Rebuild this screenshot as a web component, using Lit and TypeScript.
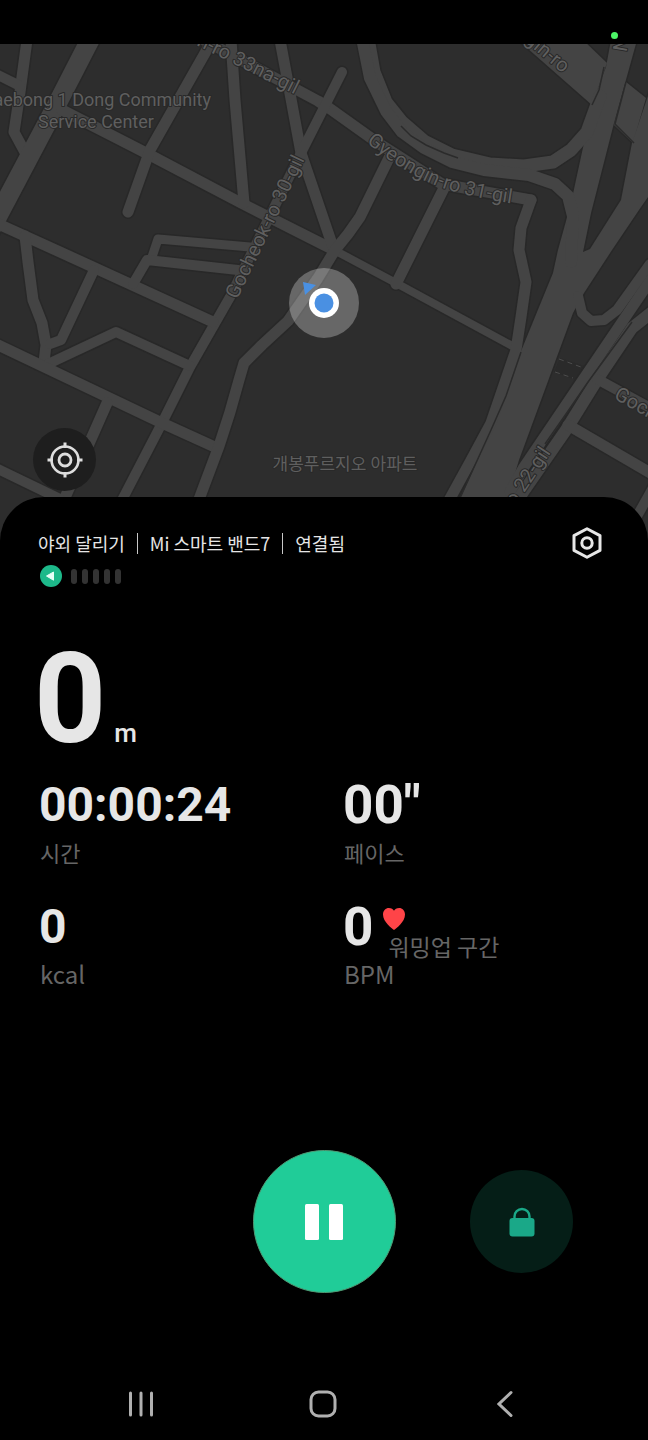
import { LitElement, css, html, svg } from "lit";
import { customElement } from "lit/decorators.js";

type Road = [width: number, points: string];

const ROADS: Road[] = [
  [11, "27,40 20,92 14,132 27,156"],
  [19, "91,38 55,108 -20,250"],
  [10, "-4,74 20,86"],
  [11, "62,110 148,154 243,204 336,251"],
  [8, "334,250 396,283 516,348"],
  [11, "209,46 150,150 128,212"],
  [11, "200,38 318,101 329,108 378,143 442,184 531,200"],
  [11, "231,40 235,100 244,203"],
  [11, "280,40 289,88 301,153 334,250"],
  [10, "342,72 301,153 230,297 190,367 162,423 121,502"],
  [11, "-4,223 60,252 213,322"],
  [11, "25,236 28,262 33,300 42,323 46,345 44,362"],
  [10, "94,270 61,340 50,344"],
  [10, "48,364 116,332 190,366"],
  [11, "-4,344 162,423 217,448"],
  [11, "107,403 88,446 63,502"],
  [10, "-4,468 60,499"],
  [9, "250,247 158,239 152,257"],
  [10, "238,270 147,260 133,284"],
  [11, "389,158 360,217 348,234 335,250 318,278 288,321 262,345 244,363 239,380 230,412 219,446 198,502"],
  [11, "444,188 396,284"],
  [11, "531,200 521,228 519,250 526,282 521,317 516,350 491,423 470,462 447,504"],
  [13, "368,38 374,72 386,102 402,122 424,141 452,155 490,164 524,166 553,162 571,150 587,132 600,96"],
  [12, "362,38 370,78 386,111 402,132 424,148 452,162 484,170 529,175 555,184 568,196 573,216 571,262"],
  [10, "578,296 582,313 591,321 604,320 617,310 650,264"],
  [11, "652,278 639,297 524,467 510,492"],
  [12, "652,312 632,328 597,380 566,430 512,508"],
  [10, "597,379 652,409"],
  [11, "568,425 652,474"],
  [10, "636,518 654,486"],
];

const AREAS: string[] = [
  "518,40 583,40 607,63 592,105",
  "626,82 646,98 633,143 614,125",
  "611,40 637,40 614,123 591,213 583,252 590,249 621,200 632,143 650,90 650,194 641,207 612,250 584,293 580,300 573,313 519,460 507,500 502,510 455,510 484,446 497,410 553,273 558,250 571,203 584,143 592,103 606,67",
];

@customElement("run-map")
export class RunMap extends LitElement {
  static styles = css`
    :host {
      display: block;
      background: #2d2d2d;
    }
    .canvas {
      display: block;
      width: 100%;
      height: 100%;
    }
    .casing,
    .road {
      fill: none;
      stroke-linejoin: round;
      stroke-linecap: round;
    }
    .casing {
      stroke: #282828;
    }
    .road {
      stroke: #444444;
    }
    .area {
      fill: #444444;
    }
    .area-edge {
      fill: #282828;
      stroke: #282828;
      stroke-width: 3;
    }
    .seam {
      fill: none;
      stroke: #2b2b2b;
      stroke-width: 1.5;
    }
    .dash {
      fill: none;
      stroke: #4c4c4c;
      stroke-width: 1;
      stroke-dasharray: 5 4;
    }
    .label {
      font-family: Roboto, "Noto Sans CJK KR", sans-serif;
      font-size: 18px;
      fill: #5f5f5f;
      stroke: #292929;
      stroke-width: 2px;
      stroke-linejoin: round;
      paint-order: stroke;
    }
    .place {
      font-size: 17px;
    }
    .street {
      font-size: 20px;
    }
  `;

  render() {
    return html`
      <svg class="canvas" viewBox="0 44 648 497" preserveAspectRatio="xMidYMid slice" role="img" aria-label="Map">
        <defs>
          <path id="s33" d="M196,45 L320,107" />
          <path id="s31" d="M366,142 Q412,180 452,191 T540,207" />
          <path id="s30" d="M237,300 L315,138" />
          <path id="sro" d="M524,41 L600,105" />
          <path id="s22" d="M515,507 L572,421" />
          <path id="sgo" d="M613,398 L680,436" />
        </defs>
        <polygon points="560,358 584,366 576,380 554,372" fill="#2a2a2a" />
        ${AREAS.map((p) => svg`<polygon class="area-edge" points=${p} />`)}
        ${ROADS.map(([w, p]) => svg`<polyline class="casing" stroke-width=${w + 3} points=${p} />`)}
        ${AREAS.map((p) => svg`<polygon class="area" points=${p} />`)}
        ${ROADS.map(([w, p]) => svg`<polyline class="road" stroke-width=${w} points=${p} />`)}
        <polyline class="seam" points="401,126 411,136 426,145 444,153 458,158" />
        <polyline class="seam" points="604,67 599,90 592,105" />
        <polyline class="seam" points="626,82 615,124 634,143" />
        <polyline class="seam" points="521,352 506,396 491,430 460,498" />
        <polyline class="seam" points="632,322 588,382 566,414 545,444" />
        <path class="dash" d="M559,359 L581,367 M555,372 L573,378" />

        <text class="label" x="211" y="106" text-anchor="end">Gaebong 1 Dong Community</text>
        <text class="label" x="96" y="128" text-anchor="middle">Service Center</text>
        <text class="label place" x="345" y="470" text-anchor="middle">개봉푸르지오 아파트</text>
        <text class="label street"><textPath href="#s33">n-ro 33na-gil</textPath></text>
        <text class="label street"><textPath href="#s31">Gyeongin-ro 31-gil</textPath></text>
        <text class="label street"><textPath href="#s30">Gocheok-ro 30-gil</textPath></text>
        <text class="label street"><textPath href="#sro">gin-ro</textPath></text>
        <text class="label street"><textPath href="#s22">o 22-gil</textPath></text>
        <text class="label street"><textPath href="#sgo">Goche</textPath></text>
        <text class="label street" transform="translate(615 36) rotate(100)">N</text>

        <circle cx="324" cy="303" r="35" fill="#ffffff" fill-opacity="0.28" />
        <path d="M303,282 L316,285 L305,295 Z" fill="#4a90e2" />
        <circle cx="324" cy="303" r="15" fill="#ffffff" />
        <circle cx="324" cy="303" r="9.5" fill="#4a90e2" />
      </svg>
    `;
  }
}

@customElement("app-root")
export class AppRoot extends LitElement {
  static styles = css`
    :host {
      display: flex;
      flex-direction: column;
      min-height: 100vh;
      background: #000000;
      color: #e6e6e6;
      font-family: "Noto Sans CJK KR", "Noto Sans", sans-serif;
    }
    button {
      display: grid;
      place-items: center;
      padding: 0;
      border: 0;
      background: none;
      color: inherit;
      cursor: pointer;
    }
    svg {
      display: block;
    }
    .status {
      display: flex;
      justify-content: flex-end;
      align-items: flex-end;
      height: 44px;
      padding: 0 30px 5px 0;
      box-sizing: border-box;
    }
    .camera-dot {
      width: 7px;
      height: 7px;
      border-radius: 50%;
      background: #4cf567;
    }
    .map-area {
      position: relative;
    }
    .map {
      aspect-ratio: 648 / 497;
    }
    .locate {
      position: absolute;
      left: 33px;
      bottom: 50px;
      width: 63px;
      height: 63px;
      border-radius: 50%;
      background: #1e1e1e;
      color: #dedede;
    }
    .panel {
      position: relative;
      display: flex;
      flex: 1;
      flex-direction: column;
      margin-top: -44px;
      padding-top: 30px;
      border-radius: 44px 44px 0 0;
      background: #000000;
    }
    .info {
      padding: 0 40px;
    }
    .header {
      display: flex;
      align-items: center;
      justify-content: space-between;
      height: 32px;
      margin: 0 5px 0 -2px;
    }
    .title {
      display: flex;
      align-items: center;
      gap: 12px;
      margin: 0;
      font-size: 18px;
      font-weight: 400;
      line-height: 34px;
    }
    .divider {
      width: 1px;
      height: 21px;
      background: #c8c8c8;
    }
    .gps {
      display: flex;
      align-items: center;
      gap: 9px;
      margin-top: 6px;
    }
    .bars {
      display: flex;
      gap: 5px;
    }
    .bar {
      width: 6px;
      height: 15px;
      border-radius: 3px;
      background: #333333;
    }
    .distance {
      display: flex;
      align-items: baseline;
      gap: 8px;
      margin: 51px 0 15px -6px;
      font-family: Roboto, sans-serif;
      font-size: 126px;
      font-weight: 700;
      line-height: 122px;
    }
    .unit {
      font-size: 26px;
      font-weight: 500;
      line-height: 28px;
    }
    .stats {
      display: grid;
      grid-template-columns: 1fr 1fr;
      gap: 30px 40px;
      margin: 0;
    }
    .stat {
      display: flex;
      flex-direction: column-reverse;
      gap: 2px;
    }
    .value {
      display: flex;
      gap: 10px;
      height: 60px;
      margin: 0 0 0 -1px;
      font-family: Roboto, sans-serif;
      font-size: 48px;
      font-weight: 700;
      line-height: 60px;
    }
    .large {
      font-size: 53px;
    }
    .label {
      color: #666666;
      font-size: 22px;
      font-weight: 400;
      line-height: 30px;
    }
    .latin {
      font-size: 24px;
    }
    .zone {
      display: flex;
      flex-direction: column;
      gap: 5px;
      padding-top: 11px;
    }
    .zone-name {
      padding-left: 5px;
      color: #666666;
      font-family: "Noto Sans CJK KR", sans-serif;
      font-size: 23px;
      font-weight: 400;
      line-height: 22px;
    }
    .controls {
      display: grid;
      grid-template-columns: 1fr auto 1fr;
      align-items: center;
      justify-items: center;
      margin-top: auto;
      padding: 40px 0 75px;
    }
    .pause {
      grid-column: 2;
      width: 143px;
      height: 143px;
      border: 1px solid #4f9a74;
      border-radius: 50%;
      background: #20cc98;
    }
    .lock {
      width: 103px;
      height: 103px;
      border-radius: 50%;
      background: #051e17;
    }
    .nav {
      display: grid;
      grid-template-columns: repeat(3, 1fr);
      padding: 0 52px 0 50px;
    }
    .nav-button {
      height: 72px;
      color: #b0b0b0;
    }
  `;

  render() {
    return html`
      <div class="status"><span class="camera-dot"></span></div>
      <div class="map-area">
        <run-map class="map"></run-map>
        <button class="locate" aria-label="현재 위치">
          <svg width="36" height="36" viewBox="0 0 36 36" fill="none" stroke="currentColor">
            <circle cx="18" cy="18" r="13.5" stroke-width="2.6" />
            <circle cx="18" cy="18" r="6" stroke-width="2.8" />
            <path d="M18,0.5V6M18,30v5.5M0.5,18H6M30,18h5.5" stroke-width="3" />
          </svg>
        </button>
      </div>
      <main class="panel">
        <div class="info">
          <header class="header">
            <h1 class="title">
              <span>야외 달리기</span><span class="divider"></span><span>Mi 스마트 밴드7</span><span class="divider"></span
              ><span>연결됨</span>
            </h1>
            <button aria-label="설정">
              <svg width="32" height="32" viewBox="0 0 32 32" fill="none" stroke="currentColor" stroke-linejoin="round">
                <path d="M16,1.7 L29,8.6 V23.4 L16,30.3 L3,23.4 V8.6 Z" stroke-width="3" />
                <circle cx="16" cy="16" r="5.2" stroke-width="3" />
              </svg>
            </button>
          </header>
          <div class="gps">
            <svg width="22" height="22" viewBox="0 0 22 22">
              <circle cx="11" cy="11" r="11" fill="#1db98a" />
              <path d="M6.5,11 L13.5,7 V15.2 Z" fill="#e8fff7" stroke="#e8fff7" stroke-linejoin="round" />
            </svg>
            <div class="bars">${[1, 2, 3, 4, 5].map(() => html`<span class="bar"></span>`)}</div>
          </div>
          <div class="distance"><span>0</span><span class="unit">m</span></div>
          <dl class="stats">
            <div class="stat">
              <dt class="label">시간</dt>
              <dd class="value">00:00:24</dd>
            </div>
            <div class="stat">
              <dt class="label">페이스</dt>
              <dd class="value large">00"</dd>
            </div>
            <div class="stat">
              <dt class="label latin">kcal</dt>
              <dd class="value">0</dd>
            </div>
            <div class="stat">
              <dt class="label latin">BPM</dt>
              <dd class="value large">
                <span>0</span>
                <span class="zone">
                  <svg width="22" height="22" viewBox="0 0 22 22" fill="#ff4448">
                    <path
                      d="M11,22 C9,20.5 0,14 0,6.5 C0,2.5 2.8,0 5.8,0 C8.3,0 10.2,1.2 11,2.8 C11.8,1.2 13.7,0 16.2,0 C19.2,0 22,2.5 22,6.5 C22,14 13,20.5 11,22 Z"
                    />
                  </svg>
                  <span class="zone-name">워밍업 구간</span>
                </span>
              </dd>
            </div>
          </dl>
        </div>
        <div class="controls">
          <button class="pause" aria-label="일시정지">
            <svg width="40" height="38" viewBox="0 0 40 38" fill="#ffffff">
              <rect x="1" y="1" width="14" height="36" rx="1.5" />
              <rect x="25" y="1" width="14" height="36" rx="1.5" />
            </svg>
          </button>
          <button class="lock" aria-label="잠금">
            <svg width="26" height="30" viewBox="0 0 26 30">
              <path d="M5.5,13 V9.5 a7.5,7.5 0 0 1 15,0 V13" fill="none" stroke="#1aa888" stroke-width="2.4" />
              <rect x="0.5" y="11" width="25" height="18.5" rx="3" fill="#1aa888" />
            </svg>
          </button>
        </div>
        <nav class="nav">
          <button class="nav-button" aria-label="최근 앱">
            <svg width="26" height="28" viewBox="0 0 26 28" stroke="currentColor" stroke-width="3" stroke-linecap="round">
              <path d="M2.5,3V25M13,3V25M23.5,3V25" />
            </svg>
          </button>
          <button class="nav-button" aria-label="홈">
            <svg width="28" height="28" viewBox="0 0 28 28" fill="none" stroke="currentColor" stroke-width="3">
              <rect x="2" y="2" width="24" height="24" rx="7.5" />
            </svg>
          </button>
          <button class="nav-button" aria-label="뒤로">
            <svg
              width="16"
              height="28"
              viewBox="0 0 16 28"
              fill="none"
              stroke="currentColor"
              stroke-width="3"
              stroke-linecap="round"
            >
              <path d="M14,2.5 L2,14 L14,25.5" />
            </svg>
          </button>
        </nav>
      </main>
    `;
  }
}
